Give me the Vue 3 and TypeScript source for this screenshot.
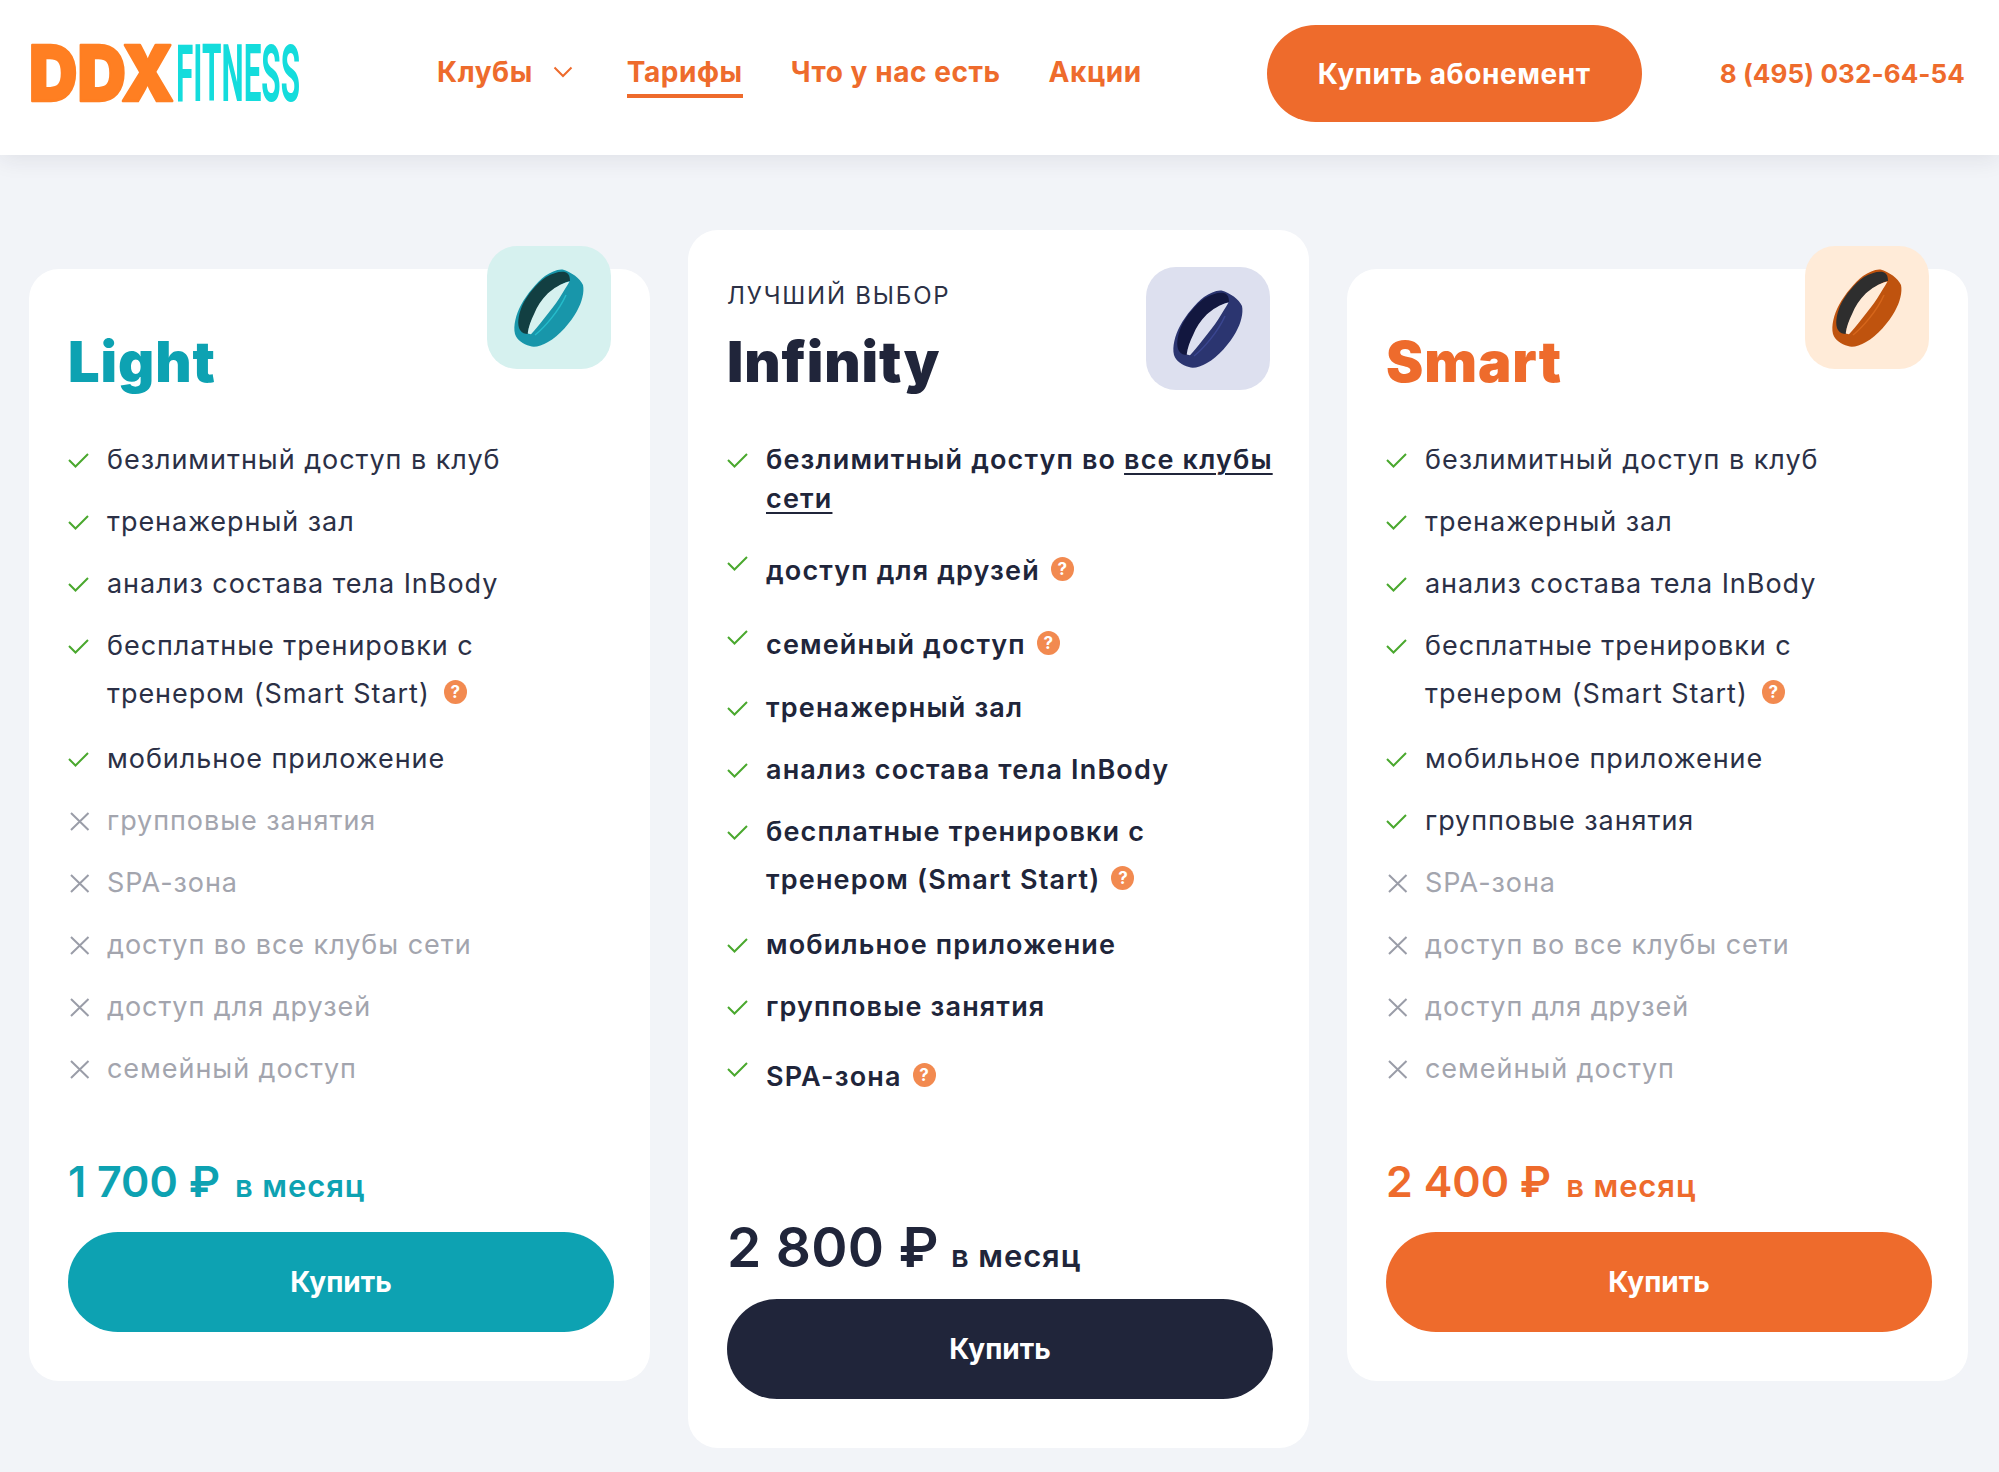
<script setup lang="ts">
interface Feature { text: string; on: boolean; tip?: boolean; cls?: string }

const shared = (spaOn: boolean, groupOn: boolean): Feature[] => [
  { text: 'безлимитный доступ в клуб', on: true },
  { text: 'тренажерный зал', on: true },
  { text: 'анализ состава тела InBody', on: true },
  { text: 'бесплатные тренировки с тренером (Smart Start)', on: true, tip: true, cls: 'narrow' },
  { text: 'мобильное приложение', on: true },
  { text: 'групповые занятия', on: groupOn },
  { text: 'SPA-зона', on: spaOn },
  { text: 'доступ во все клубы сети', on: false },
  { text: 'доступ для друзей', on: false },
  { text: 'семейный доступ', on: false },
]

const plans = [
  { id: 'light', name: 'Light', price: '1 700 ₽', features: shared(false, false) },
  {
    id: 'infinity', name: 'Infinity', price: '2 800 ₽', label: 'ЛУЧШИЙ ВЫБОР',
    features: [
      { text: 'безлимитный доступ во ', on: true, cls: 'tight link' },
      { text: 'доступ для друзей', on: true, tip: true, cls: 'raised' },
      { text: 'семейный доступ', on: true, tip: true, cls: 'raised after' },
      { text: 'тренажерный зал', on: true },
      { text: 'анализ состава тела InBody', on: true },
      { text: 'бесплатные тренировки с тренером (Smart Start)', on: true, tip: true, cls: 'narrow' },
      { text: 'мобильное приложение', on: true },
      { text: 'групповые занятия', on: true },
      { text: 'SPA-зона', on: true, tip: true, cls: 'raised spa' },
    ] as Feature[],
  },
  { id: 'smart', name: 'Smart', price: '2 400 ₽', features: shared(false, true) },
]
</script>

<template>
  <div class="page">
    <header class="topbar">
      <svg class="logo" viewBox="0 0 271 57" width="271" height="57" role="img" aria-label="DDX Fitness">
        <text class="logo-ddx" x="0" y="56" textLength="145" lengthAdjust="spacingAndGlyphs">DDX</text>
        <text class="logo-fit" x="147" y="56" textLength="124" lengthAdjust="spacingAndGlyphs">FITNESS</text>
      </svg>
      <nav class="nav">
        <a class="nav-item clubs">
          Клубы
          <svg class="chev" viewBox="0 0 20 12" width="20" height="12"><path d="M1.5 1.5 10 10l8.500-8.500" /></svg>
        </a>
        <a class="nav-item active">Тарифы</a>
        <a class="nav-item">Что у нас есть</a>
        <a class="nav-item">Акции</a>
      </nav>
      <button class="cta">Купить абонемент</button>
      <a class="phone">8 (495) 032-64-54</a>
    </header>

    <main class="plans">
      <section v-for="p in plans" :key="p.id" class="card" :class="p.id">
        <div class="badge">
          <svg viewBox="0 0 124 123" width="124" height="123">
            <path class="band" d="M75.500 23.500C84 26 93 32 96 39c1.500 7-1 17-6 26-6 11-18 25-29 31-7 4-14 6-18 4-7-2-13-6-15-12-2-8 1-20 6-29 6-11 16-23 24-29 6-4 12-7 17.500-6.500Z" />
            <path class="inner" d="M78 26c3 1 5 3 5 9-11 2-25 15-33 29-5 9-9 18-9 24-3 0-6-1-8-4-3-5-2-14 2-24 5-11 15-23 24-29 7-4 14-6 19-5Z" />
            <path class="hole" d="M82.500 35.500C74 37 66 43 60.700 47.500 54 54 50 61 47.300 67.500 44 74 41.500 81 40.700 87.500L44 88.300C48 84 53 78 57.300 72.300 63 65 68 59 72.300 52.300 76 46 80 40 82.500 35.500Z" />
            <path class="shine" d="M48 89c9-7 24-24 31-40" />
          </svg>
        </div>
        <div v-if="p.label" class="label">{{ p.label }}</div>
        <h2 class="title">{{ p.name }}</h2>
        <ul class="features">
          <li v-for="f in p.features" :key="f.text" class="row" :class="[f.on ? 'on' : 'off', f.cls]">
            <svg v-if="f.on" class="mark" viewBox="0 0 21 15" width="21" height="15"><path d="M1 7l6.500 6.500L20 1" /></svg>
            <svg v-else class="mark" viewBox="0 0 21 19" width="21" height="19"><path d="M2 1l17.500 17M19.500 1 2 18" /></svg>
            <span class="txt">{{ f.text }}<template v-if="f.cls?.includes('link')"><a class="u">все клубы сети</a></template><span v-if="f.tip" class="tip">?</span></span>
          </li>
        </ul>
        <div class="price"><strong>{{ p.price }}</strong><span>в месяц</span></div>
        <button class="buy">Купить</button>
      </section>
    </main>
  </div>
</template>

<style>
html, body { margin: 0; background: #f2f4f8; }
</style>

<style scoped>
.page {
  min-height: 1472px;
  background: #f2f4f8;
  font-family: Inter, "Open Sans", sans-serif;
  color: #20253a;
  overflow: hidden;
}
.topbar {
  height: 155px;
  box-sizing: border-box;
  padding: 0 34px 8px 29px;
  display: flex;
  align-items: center;
  background: #fff;
  box-shadow: 0 4px 22px rgba(32, 37, 58, 0.09);
}
.logo { flex: none; overflow: visible; }
.logo-ddx { font-family: Inter, sans-serif; font-weight: 900; font-size: 77px; fill: #ff7f22; stroke: #ff7f22; stroke-width: 2.4px; stroke-linejoin: round; }
.logo-fit { font-family: Roboto, sans-serif; font-weight: 700; font-size: 79px; fill: #14dcdc; }
.nav { display: flex; align-items: center; gap: 48px; margin-left: 137px; margin-top: -3px; }
.nav-item {
  position: relative;
  font-size: 28px;
  font-weight: 700;
  letter-spacing: 0.55px;
  line-height: 40px;
  color: #ee6b2c;
  white-space: nowrap;
}
.clubs { display: flex; align-items: center; gap: 20px; margin-right: 6px; }
.chev { fill: none; stroke: #ee6b2c; stroke-width: 2; }
.active::after {
  content: "";
  position: absolute;
  left: 0;
  right: 0;
  bottom: -6px;
  height: 4px;
  background: #ee6b2c;
}
.cta {
  margin-left: auto;
  width: 375px;
  height: 97px;
  border: 0;
  border-radius: 49px;
  background: #ee6b2c;
  color: #fff;
  font: 700 28px Inter, sans-serif;
  letter-spacing: 0.55px;
}
.phone {
  margin-left: 78px;
  font-size: 26px;
  font-weight: 700;
  letter-spacing: 0.1px;
  color: #ee6b2c;
  white-space: nowrap;
}
.plans {
  display: flex;
  align-items: flex-start;
  gap: 38px;
  padding: 75px 34px 24px 29px;
}
.card {
  position: relative;
  flex: 1 1 0;
  min-height: 1112px;
  margin-top: 39px;
  box-sizing: border-box;
  padding: 61px 36px 49px 39px;
  display: flex;
  flex-direction: column;
  background: #fff;
  border-radius: 30px;
}
.card.infinity { min-height: 1218px; margin-top: 0; padding-top: 39px; }
.badge {
  position: absolute;
  top: -23px;
  right: 39px;
  width: 124px;
  height: 123px;
  border-radius: 30px;
}
.badge svg { display: block; }
.light .badge { background: #d6f1ef; --band: #1896aa; --inner: #123f42; --shine: #25bccb; --hole: #d6f1ef; }
.infinity .badge { top: 37px; background: #dde0ef; --band: #2b3570; --inner: #12173f; --shine: #3a4690; --hole: #dde0ef; }
.smart .badge { background: #ffebd8; --band: #bf530e; --inner: #2e2e2e; --shine: #d6661b; --hole: #ffebd8; }
.band { fill: var(--band); }
.inner { fill: var(--inner); }
.hole { fill: var(--hole); }
.shine { fill: none; stroke: var(--shine); stroke-width: 1.5; }
.label {
  height: 30px;
  margin-top: 12px;
  margin-bottom: 19px;
  font-size: 24px;
  font-weight: 400;
  line-height: 30px;
  letter-spacing: 1.8px;
  color: #2c3146;
}
.title {
  margin: 0 0 42px;
  font-size: 56px;
  font-weight: 900;
  line-height: 64px;
  letter-spacing: 0.9px;
}
.light .title, .light .price { color: #0da2b2; }
.smart .title, .smart .price { color: #ee6b2c; }
.features { list-style: none; margin: 0; padding: 0; display: flex; flex-direction: column; gap: 14px; }
.row {
  display: flex;
  align-items: flex-start;
  font-size: 27px;
  line-height: 48px;
  letter-spacing: 0.95px;
  color: #2b3046;
}
.row.off { color: #a3a5ae; }
.infinity .row { font-weight: 600; letter-spacing: 1.15px; color: #20253a; }
.mark { flex: none; width: 21px; margin: 17px 18px 0 0; fill: none; stroke: #4aa82e; stroke-width: 2; }
.off .mark { margin-left: 1px; margin-right: 17px; margin-top: 15px; stroke: #9a9da8; }
.narrow { margin-bottom: 3px; }
.narrow .txt { max-width: 430px; }
.tight { line-height: 39px; margin-top: 4px; margin-right: -16px; margin-bottom: 3px; }
.tight .mark { margin-top: 13px; }
.raised { margin-top: 12px; }
.raised .mark { margin-top: 9px; }
.after { margin-bottom: 1px; }
.spa { margin-top: 8px; }
.u { text-decoration: underline; text-underline-offset: 4px; text-decoration-thickness: 2px; }
.tip {
  display: inline-block;
  width: 23px;
  height: 24px;
  margin-left: 14px;
  border-radius: 50%;
  background: #f28a50;
  color: #fff;
  font-size: 17px;
  font-weight: 700;
  letter-spacing: 0;
  line-height: 24px;
  text-align: center;
  vertical-align: 5px;
}
.infinity .tip { margin-left: 11px; }
.price {
  margin-top: auto;
  display: flex;
  align-items: baseline;
  gap: 15px;
  line-height: 52px;
  color: #20253a;
}
.price strong { font-size: 43px; font-weight: 600; }
.price span { font-size: 31px; font-weight: 600; letter-spacing: 0.9px; }
.infinity .price strong { font-size: 55px; letter-spacing: 0.3px; }
.buy {
  width: 546px;
  height: 100px;
  margin-top: 20px;
  border: 0;
  border-radius: 50px;
  color: #fff;
  font: 700 28px Inter, sans-serif;
}
.infinity .price { gap: 12px; line-height: 60px; }
.infinity .buy { margin-top: 13px; background: #20253a; }
.light .buy { background: #0da2b2; }
.smart .buy { background: #ee6b2c; }
</style>
